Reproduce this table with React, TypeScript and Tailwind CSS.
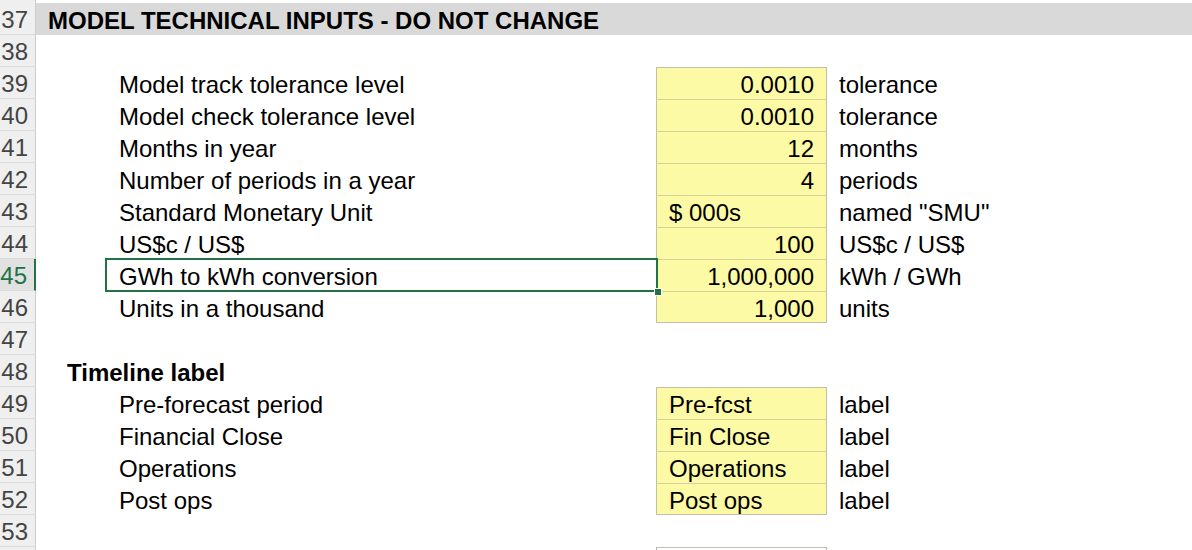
type Row = {
  n: number;
  heading?: string;
  section?: string;
  label?: string;
  value?: string;
  align?: "left" | "right";
  unit?: string;
  boxTop?: boolean;
  boxBottom?: boolean;
};

const rows: Row[] = [
  { n: 37, heading: "MODEL TECHNICAL INPUTS - DO NOT CHANGE" },
  { n: 38 },
  { n: 39, label: "Model track tolerance level", value: "0.0010", align: "right", unit: "tolerance", boxTop: true },
  { n: 40, label: "Model check tolerance level", value: "0.0010", align: "right", unit: "tolerance" },
  { n: 41, label: "Months in year", value: "12", align: "right", unit: "months" },
  { n: 42, label: "Number of periods in a year", value: "4", align: "right", unit: "periods" },
  { n: 43, label: "Standard Monetary Unit", value: "$ 000s", align: "left", unit: 'named "SMU"' },
  { n: 44, label: "US$c / US$", value: "100", align: "right", unit: "US$c / US$" },
  { n: 45, label: "GWh to kWh conversion", value: "1,000,000", align: "right", unit: "kWh / GWh" },
  { n: 46, label: "Units in a thousand", value: "1,000", align: "right", unit: "units", boxBottom: true },
  { n: 47 },
  { n: 48, section: "Timeline label" },
  { n: 49, label: "Pre-forecast period", value: "Pre-fcst", align: "left", unit: "label", boxTop: true },
  { n: 50, label: "Financial Close", value: "Fin Close", align: "left", unit: "label" },
  { n: 51, label: "Operations", value: "Operations", align: "left", unit: "label" },
  { n: 52, label: "Post ops", value: "Post ops", align: "left", unit: "label", boxBottom: true },
  { n: 53 },
  { n: 54, value: "", align: "left", boxTop: true },
];

const SELECTED = 45;

const SheetRow = ({ row }: { row: Row }) => {
  const selected = row.n === SELECTED;
  const hasBox = row.value !== undefined;
  const last = row.n === 54;
  return (
    <div className="flex h-[32px] shrink-0">
      <div
        className={`w-[36px] shrink-0 flex items-center justify-end pr-[7px] pt-[3px] border-b border-[#dadada] ${
          selected
            ? "bg-[#e1e1e1] text-[#217346] border-r-2 border-r-[#217346]"
            : "bg-[#efefef] text-[#444] border-r border-r-[#cdcdcd]"
        }`}
      >
        {last ? "" : row.n}
      </div>
      {row.heading ? (
        <div className="flex-1 bg-[#d9d9d9] flex items-center pl-[12px] pt-[3px] font-bold">
          {row.heading}
        </div>
      ) : (
        <div className="flex-1 flex relative pt-[3px]">
          <div className="w-[18px] shrink-0" />
          <div className="w-[52px] shrink-0 flex items-center pl-[13px] font-bold whitespace-nowrap overflow-visible">
            {row.section}
          </div>
          <div className="w-[550px] shrink-0 flex items-center pl-[13px] whitespace-nowrap">{row.label}</div>
          <div
            className={`w-[171px] shrink-0 flex items-center px-[12px] mt-[-3px] pt-[3px] ${
              hasBox ? "bg-[#fdfaa6] border-x border-[#c2c0a4]" : ""
            } ${row.boxTop ? "border-t border-t-[#c2c0a4]" : hasBox ? "border-t border-t-[#d6d3a0]" : ""} ${
              row.boxBottom ? "border-b border-b-[#c2c0a4]" : ""
            } ${last ? "bg-white border-t-[#b0b0b0] border-x-[#b0b0b0]" : ""} ${
              row.align === "right" ? "justify-end" : "justify-start"
            }`}
          >
            {row.value}
          </div>
          <div className="flex-1 flex items-center pl-[12px] whitespace-nowrap">{row.unit}</div>
          {selected && (
            <div className="absolute z-10 left-[69px] top-[-1px] w-[553px] h-[34px] border-2 border-[#217346] pointer-events-none">
              <div className="absolute right-[-6px] bottom-[-6px] w-[8px] h-[8px] bg-[#217346] border border-white" />
            </div>
          )}
        </div>
      )}
    </div>
  );
};

export default function App() {
  return (
    <div
      className="w-[1192px] h-[550px] overflow-hidden bg-white text-black text-[24px] leading-none flex flex-col"
      style={{ fontFamily: '"Liberation Sans", Arial, sans-serif' }}
    >
      <div className="flex h-[3px] shrink-0">
        <div className="w-[36px] bg-[#efefef] border-r border-[#cdcdcd]" />
        <div className="flex-1" />
      </div>
      {rows.map((row) => (
        <SheetRow key={row.n} row={row} />
      ))}
    </div>
  );
}
